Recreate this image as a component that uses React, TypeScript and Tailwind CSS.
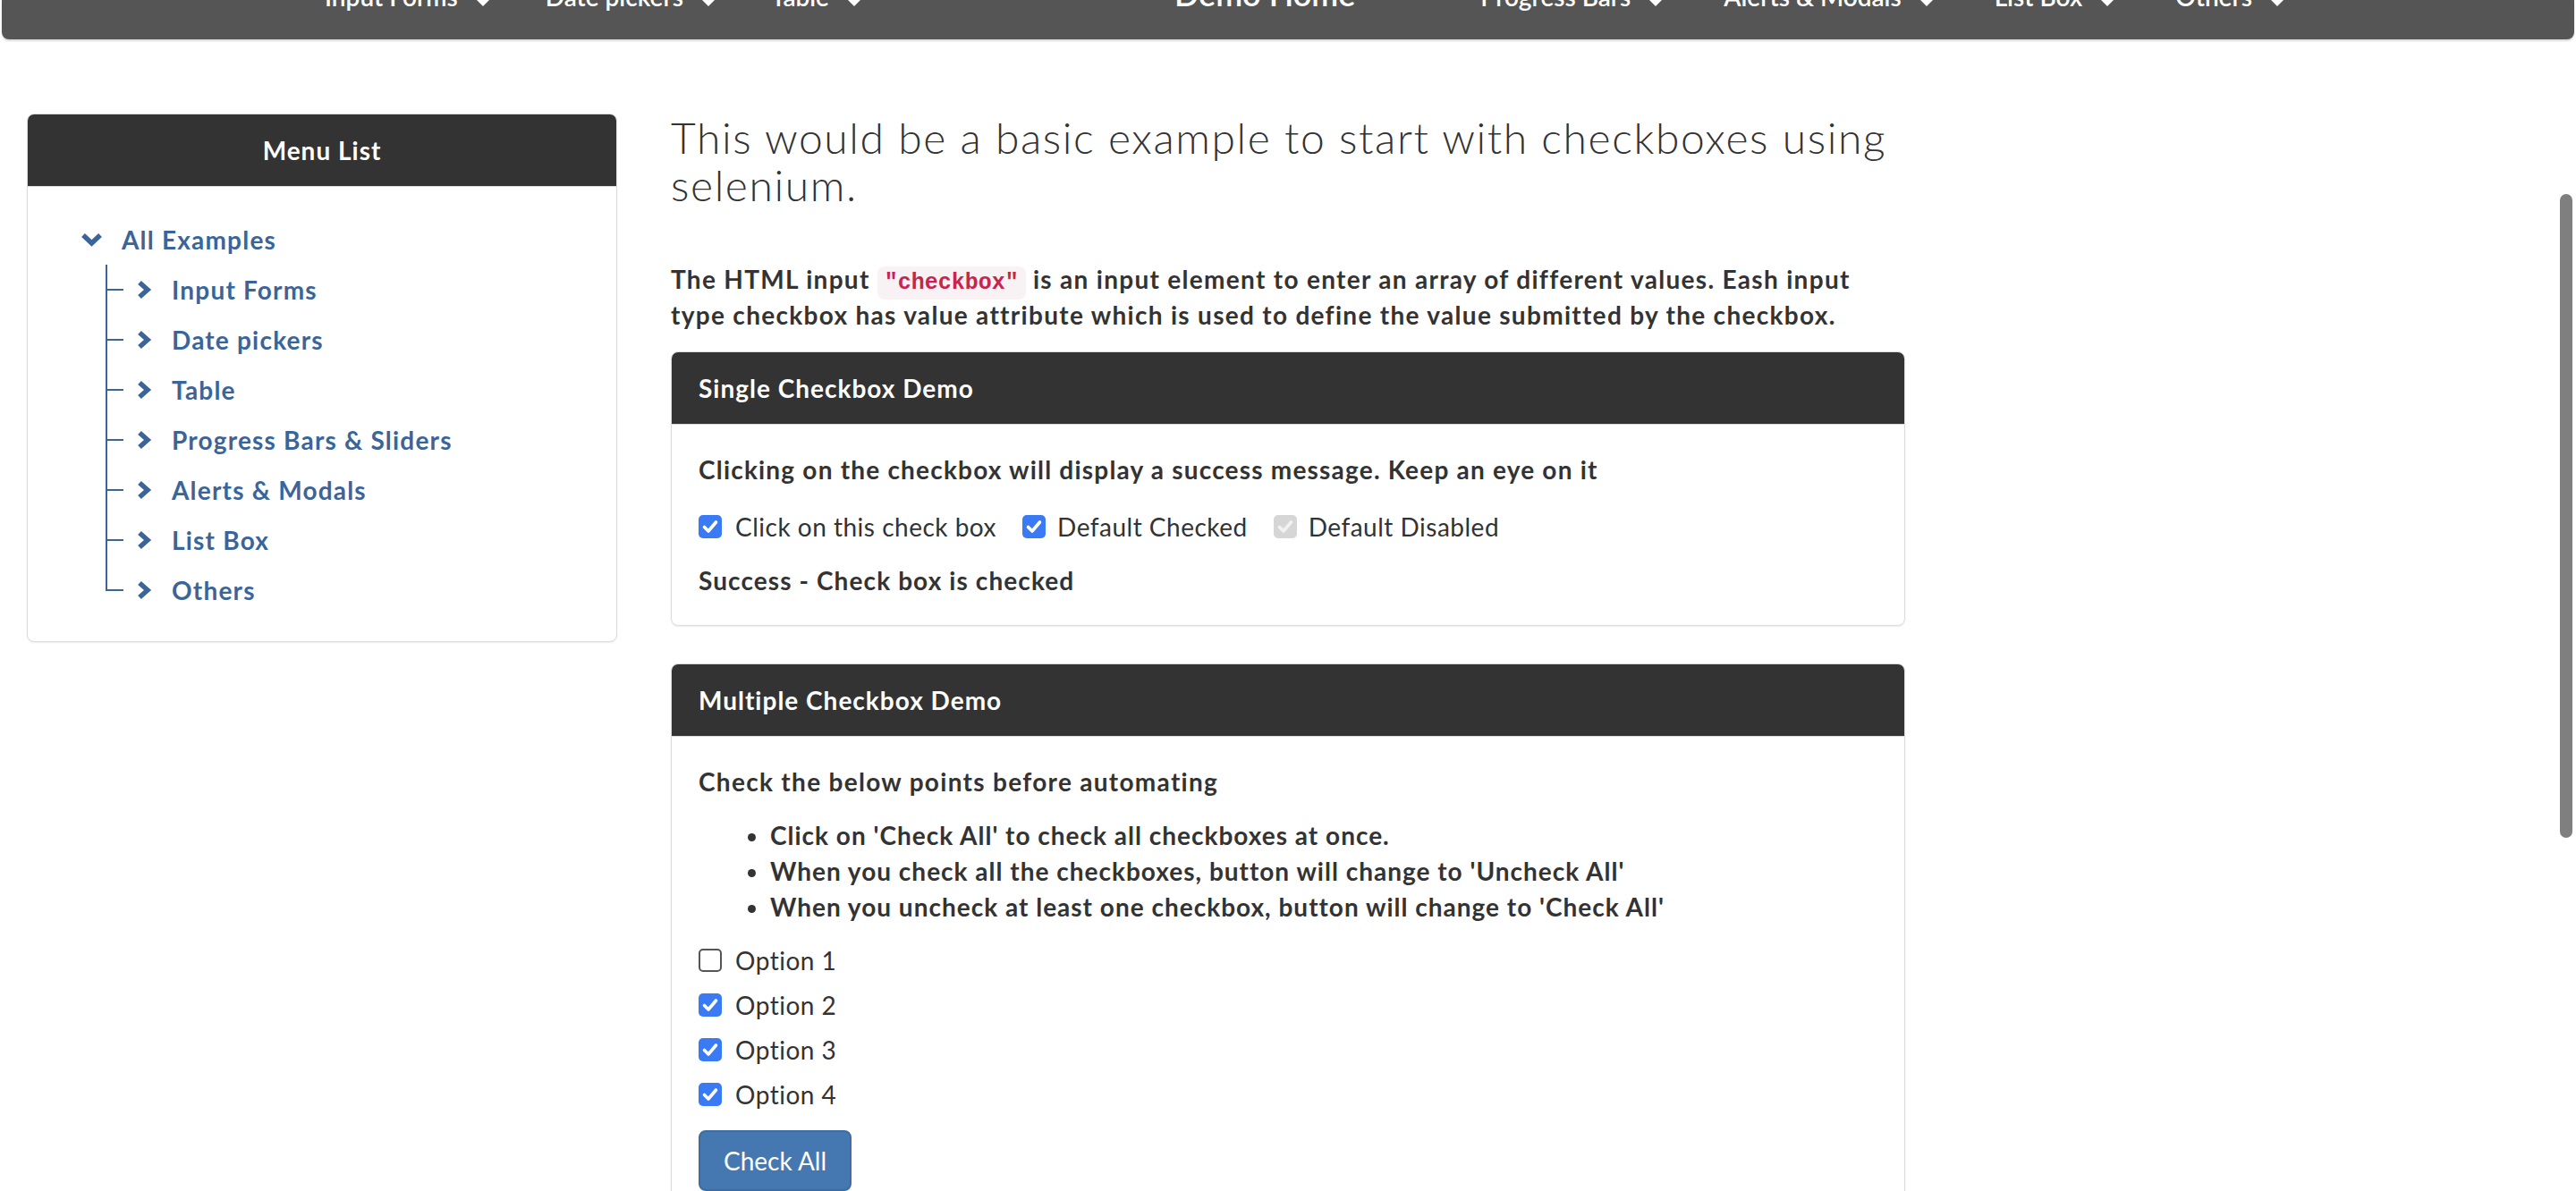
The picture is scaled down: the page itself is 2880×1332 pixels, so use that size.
import React from 'react'

const navLeft = ['Input Forms', 'Date pickers', 'Table']
const navRight = ['Progress Bars', 'Alerts & Modals', 'List Box', 'Others']
const treeItems = [
  'Input Forms',
  'Date pickers',
  'Table',
  'Progress Bars & Sliders',
  'Alerts & Modals',
  'List Box',
  'Others',
]

function Caret() {
  return (
    <span className="ml-[20px] inline-block h-0 w-0 border-x-[8px] border-t-[8px] border-x-transparent border-t-white" />
  )
}

function NavItem({ label }: { label: string }) {
  return (
    <span className="flex items-baseline text-[28px] font-semibold text-white">
      {label}
      <Caret />
    </span>
  )
}

function Box({ state }: { state: 'on' | 'off' | 'disabled' }) {
  if (state === 'off') {
    return (
      <span className="inline-block size-[26px] shrink-0 rounded-[5px] border-2 border-[#555] bg-white" />
    )
  }
  const fill = state === 'on' ? '#3a7af4' : '#d6d6d6'
  const tick = state === 'on' ? '#ffffff' : '#f2f2f2'
  return (
    <svg width="26" height="26" viewBox="0 0 26 26" className="shrink-0">
      <rect x="0" y="0" width="26" height="26" rx="5" fill={fill} />
      <path
        d="M6.5 13.5 L11 18 L19.5 8"
        fill="none"
        stroke={tick}
        strokeWidth="3.6"
        strokeLinecap="round"
        strokeLinejoin="round"
      />
    </svg>
  )
}

function ChevronRight() {
  return (
    <svg width="18" height="22" viewBox="0 0 18 22" className="shrink-0">
      <polyline
        points="4,3 13,11 4,19"
        fill="none"
        stroke="#3b6598"
        strokeWidth="5.5"
        strokeLinejoin="miter"
      />
    </svg>
  )
}

function ChevronDown() {
  return (
    <svg width="25" height="16" viewBox="0 0 25 16" className="shrink-0">
      <polyline
        points="3,3 12.5,12 22,3"
        fill="none"
        stroke="#3b6598"
        strokeWidth="5.5"
        strokeLinejoin="miter"
      />
    </svg>
  )
}

function Panel({ title, children }: { title: string; children: React.ReactNode }) {
  return (
    <div className="overflow-hidden rounded-[8px] border border-[#dcdcdc] bg-white shadow-[0_1px_2px_rgba(0,0,0,0.08)]">
      <div className="border-b border-[#dcdcdc] bg-[#333333] px-[30px] py-[20px] text-[28px] leading-[40px] font-bold tracking-[1px] text-white">
        {title}
      </div>
      <div className="p-[30px]">{children}</div>
    </div>
  )
}

export default function App() {
  return (
    <div className="relative h-[1332px] w-full overflow-hidden bg-white font-['Lato',sans-serif] text-[#333333]">
      {/* top navbar, page scrolled a little */}
      <div className="mx-[2px] flex h-[44px] flex-col rounded-b-[8px] bg-[#555555] shadow-[0_2px_2px_rgba(0,0,0,0.15)]">
        <div className="-mt-[27px] flex h-[40px] items-baseline pl-[361px] leading-[40px]">
          <div className="flex items-baseline gap-[62px]">
            {navLeft.map((l) => (
              <NavItem key={l} label={l} />
            ))}
          </div>
          <span className="ml-[350px] text-[36px] font-semibold text-white">Demo Home</span>
          <div className="ml-[140px] flex items-baseline gap-[68px]">
            {navRight.map((l) => (
              <NavItem key={l} label={l} />
            ))}
          </div>
        </div>
      </div>

      <div className="mt-[43px] flex">
        {/* sidebar */}
        <div className="w-[720px] px-[30px]">
          <div className="mt-[40px] overflow-hidden rounded-[8px] border border-[#dcdcdc] bg-white shadow-[0_1px_2px_rgba(0,0,0,0.08)]">
            <div className="border-b border-[#dcdcdc] bg-[#333333] py-[20px] text-center text-[28px] leading-[40px] font-bold tracking-[1px] text-white">
              Menu List
            </div>
            <div className="pt-[31px] pb-[29px] text-[28px] font-bold tracking-[1.2px] text-[#3b6598]">
              <div className="flex h-[56px] items-center pl-[59px]">
                <ChevronDown />
                <span className="ml-[21px]">All Examples</span>
              </div>
              <div className="pl-[87px]">
                {treeItems.map((item, i) => {
                  const last = i === treeItems.length - 1
                  return (
                    <div key={item} className="flex h-[56px] items-center">
                      <div
                        className={`flex h-full w-[20px] flex-col ${last ? '' : 'border-l-2 border-[#3b6598]'}`}
                      >
                        <div
                          className={`h-[29px] border-b-2 border-[#3b6598] ${last ? 'border-l-2' : ''}`}
                        />
                      </div>
                      <span className="ml-[14px] flex">
                        <ChevronRight />
                      </span>
                      <span className="ml-[22px]">{item}</span>
                    </div>
                  )
                })}
              </div>
            </div>
          </div>
        </div>

        {/* main content */}
        <div className="w-[1440px] px-[30px]">
          <h3 className="mt-[40px] mb-[59px] text-[48px] leading-[53px] font-light tracking-[1.6px]">
            This would be a basic example to start with checkboxes using selenium.
          </h3>
          <p className="mb-[21px] text-[28px] leading-[40px] font-bold tracking-[1.3px]">
            The HTML input{' '}
            <code className="rounded-[8px] bg-[#f9f2f4] px-[8px] py-[4px] font-['Liberation_Mono',monospace] text-[25px] leading-[24px] tracking-normal text-[#c7254e]">
              "checkbox"
            </code>{' '}
            is an input element to enter an array of different values. Eash input type checkbox has value
            attribute which is used to define the value submitted by the checkbox.
          </p>

          <Panel title="Single Checkbox Demo">
            <p className="text-[28px] leading-[40px] font-bold tracking-[1.2px]">
              Clicking on the checkbox will display a success message. Keep an eye on it
            </p>
            <div className="mt-[24px] flex h-[40px] items-center gap-[29px] text-[28px] tracking-[0.5px]">
              <label className="flex items-center gap-[15px]">
                <Box state="on" />
                Click on this check box
              </label>
              <label className="flex items-center gap-[13px]">
                <Box state="on" />
                Default Checked
              </label>
              <label className="flex items-center gap-[13px]">
                <Box state="disabled" />
                Default Disabled
              </label>
            </div>
            <p className="mt-[20px] text-[28px] leading-[40px] font-bold tracking-[1.1px]">
              Success - Check box is checked
            </p>
          </Panel>

          <div className="mt-[42px]">
            <Panel title="Multiple Checkbox Demo">
              <p className="text-[28px] leading-[40px] font-bold tracking-[1.3px]">
                Check the below points before automating
              </p>
              <ul className="my-[20px] list-disc pl-[80px] text-[28px] leading-[40px] font-bold tracking-[1px]">
                <li>Click on 'Check All' to check all checkboxes at once.</li>
                <li>When you check all the checkboxes, button will change to 'Uncheck All'</li>
                <li>When you uncheck at least one checkbox, button will change to 'Check All'</li>
              </ul>
              <div className="flex flex-col gap-[10px] text-[28px] tracking-[0.5px]">
                {[1, 2, 3, 4].map((n) => (
                  <label key={n} className="flex h-[40px] items-center gap-[15px]">
                    <Box state={n === 1 ? 'off' : 'on'} />
                    Option {n}
                  </label>
                ))}
              </div>
              <button
                type="button"
                className="mt-[20px] h-[68px] rounded-[8px] border-2 border-[#3e6da3] bg-[#4578b0] px-[26px] text-[28px] text-white"
              >
                Check All
              </button>
            </Panel>
          </div>
        </div>
      </div>

      {/* overlay scrollbar */}
      <div className="absolute top-[217px] right-[4px] h-[720px] w-[14px] rounded-full bg-[#7f7f7f]" />
    </div>
  )
}
